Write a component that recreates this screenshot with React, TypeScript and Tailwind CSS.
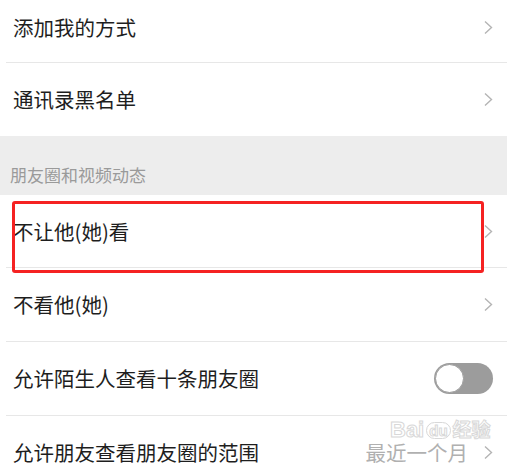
import { ReactNode } from "react";

const font = '"Noto Sans CJK SC", "Noto Sans", sans-serif';

function Chevron() {
    return (
        <svg width="10" height="15" viewBox="0 0 10 15" className="shrink-0">
            <polyline points="2,1.5 8.5,7.5 2,13.5" fill="none" stroke="#b4b4b4" strokeWidth="1.4" />
        </svg>
    );
}

function Toggle() {
    return (
        <div className="w-[59px] h-[31px] rounded-full bg-[#9c9c9c] flex items-center p-[1px]">
            <div className="w-[29px] h-[29px] rounded-full bg-white border border-[#9c9c9c]" />
        </div>
    );
}

interface RowProps {
    label: string;
    right?: ReactNode;
    className?: string;
}

function Row({ label, right, className = "h-[73px]" }: RowProps) {
    return (
        <div className={`flex items-center justify-between pl-[13px] pr-[14px] bg-white ${className}`}>
            <span className="text-[20.5px] text-[#1e1e1e] leading-none">{label}</span>
            {right ?? <Chevron />}
        </div>
    );
}

const Divider = () => <div className="h-px bg-[#e7e7e7] ml-[6px]" />;

export default function App() {
    return (
        <div className="w-[507px] h-[466px] overflow-hidden bg-white relative" style={{ fontFamily: font }}>
            <Row label="添加我的方式" className="h-[62px] pb-[8px]" />
            <Divider />
            <Row label="通讯录黑名单" />

            <div className="h-[59px] bg-[#ededed] flex items-end pl-[10px] pb-[8px]">
                <span className="text-[17px] text-[#9a9a9a] leading-[24px]">朋友圈和视频动态</span>
            </div>

            <div className="relative">
                <Row label="不让他(她)看" className="h-[72px]" />
                <div className="absolute left-[12px] top-[6px] w-[472px] h-[72px] border-[3px] border-[#f52222] rounded-[3px]" />
            </div>
            <Divider />
            <Row label="不看他(她)" />
            <Divider />
            <Row label="允许陌生人查看十条朋友圈" right={<Toggle />} />
            <Divider />
            <Row
                label="允许朋友查看朋友圈的范围"
                right={
                    <div className="flex items-center gap-[15px]">
                        <span className="text-[20.5px] text-[#b0b0b0] leading-none">最近一个月</span>
                        <Chevron />
                    </div>
                }
            />

            <div className="absolute left-[390px] top-[419px] flex items-center gap-[2px] text-white text-[22px] font-bold leading-none [-webkit-text-stroke:1px_#d4d4d4] opacity-90" style={{ fontFamily: '"Liberation Sans", "Noto Sans CJK SC", sans-serif' }}>
                <span>Bai</span>
                <span className="rounded-full border border-[#d4d4d4] px-[2px] text-[15px]">du</span>
                <span className="text-[19px]">经验</span>
            </div>
        </div>
    );
}
